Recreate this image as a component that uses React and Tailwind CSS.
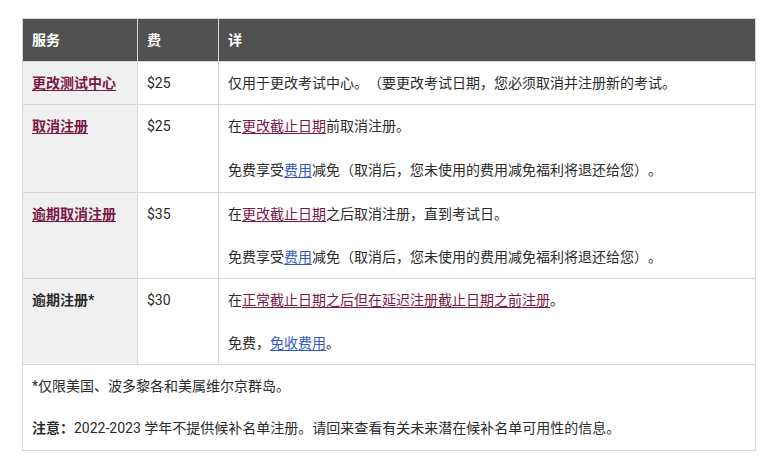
import React from "react";

const link = "text-[#7b1745] underline underline-offset-2";
const blue = "text-[#3559c7] underline underline-offset-2";
const cell = "border border-[#d6d6d6] px-[9px] pt-[11px] pb-[11px] align-top";

function App() {
  return (
    <div
      className="bg-white min-h-screen pt-[18px] pl-[22px] text-[14px] leading-[20px] text-[#2b2b2b] [text-spacing-trim:space-all]"
      style={{ fontFamily: 'Roboto, "Noto Sans CJK SC", sans-serif' }}
    >
      <table className="w-[734px] border-collapse border border-[#d6d6d6]">
        <thead>
          <tr className="bg-[#515151] text-white font-bold text-left">
            <th className="w-[115px] px-[9px] pt-[11px] pb-[11px] border-r border-[#d6d6d6]">服务</th>
            <th className="w-[81px] px-[9px] pt-[11px] pb-[11px] border-r border-[#d6d6d6]">费</th>
            <th className="px-[9px] pt-[11px] pb-[11px]">详</th>
          </tr>
        </thead>
        <tbody>
          <tr>
            <td className={`${cell} bg-[#f0f0f0] font-bold`}>
              <a className={link}>更改测试中心</a>
            </td>
            <td className={cell}>$25</td>
            <td className={cell}>仅用于更改考试中心。（要更改考试日期，您必须取消并注册新的考试。</td>
          </tr>
          <tr>
            <td className={`${cell} bg-[#f0f0f0] font-bold`}>
              <a className={link}>取消注册</a>
            </td>
            <td className={cell}>$25</td>
            <td className={`${cell} pb-[12px]`}>
              <p className="mb-[24px]">
                在<a className={link}>更改截止日期</a>前取消注册。
              </p>
              <p>
                免费享受<a className={blue}>费用</a>减免（取消后，您未使用的费用减免福利将退还给您）。
              </p>
            </td>
          </tr>
          <tr>
            <td className={`${cell} bg-[#f0f0f0] font-bold`}>
              <a className={link}>逾期取消注册</a>
            </td>
            <td className={cell}>$35</td>
            <td className={cell}>
              <p className="mb-[23px]">
                在<a className={link}>更改截止日期</a>之后取消注册，直到考试日。
              </p>
              <p>
                免费享受<a className={blue}>费用</a>减免（取消后，您未使用的费用减免福利将退还给您）。
              </p>
            </td>
          </tr>
          <tr>
            <td className={`${cell} bg-[#f0f0f0] font-bold`}>逾期注册*</td>
            <td className={cell}>$30</td>
            <td className={cell}>
              <p className="mb-[23px]">
                在<a className={link}>正常截止日期之后但在延迟注册截止日期之前注册</a>。
              </p>
              <p>
                免费，<a className={blue}>免收费用</a>。
              </p>
            </td>
          </tr>
          <tr>
            <td colSpan={3} className={`${cell} pb-[12px]`}>
              <p className="mb-[22px]">*仅限美国、波多黎各和美属维尔京群岛。</p>
              <p>
                <strong>注意：</strong>2022-2023 学年不提供候补名单注册。请回来查看有关未来潜在候补名单可用性的信息。
              </p>
            </td>
          </tr>
        </tbody>
      </table>
    </div>
  );
}

export default App;
